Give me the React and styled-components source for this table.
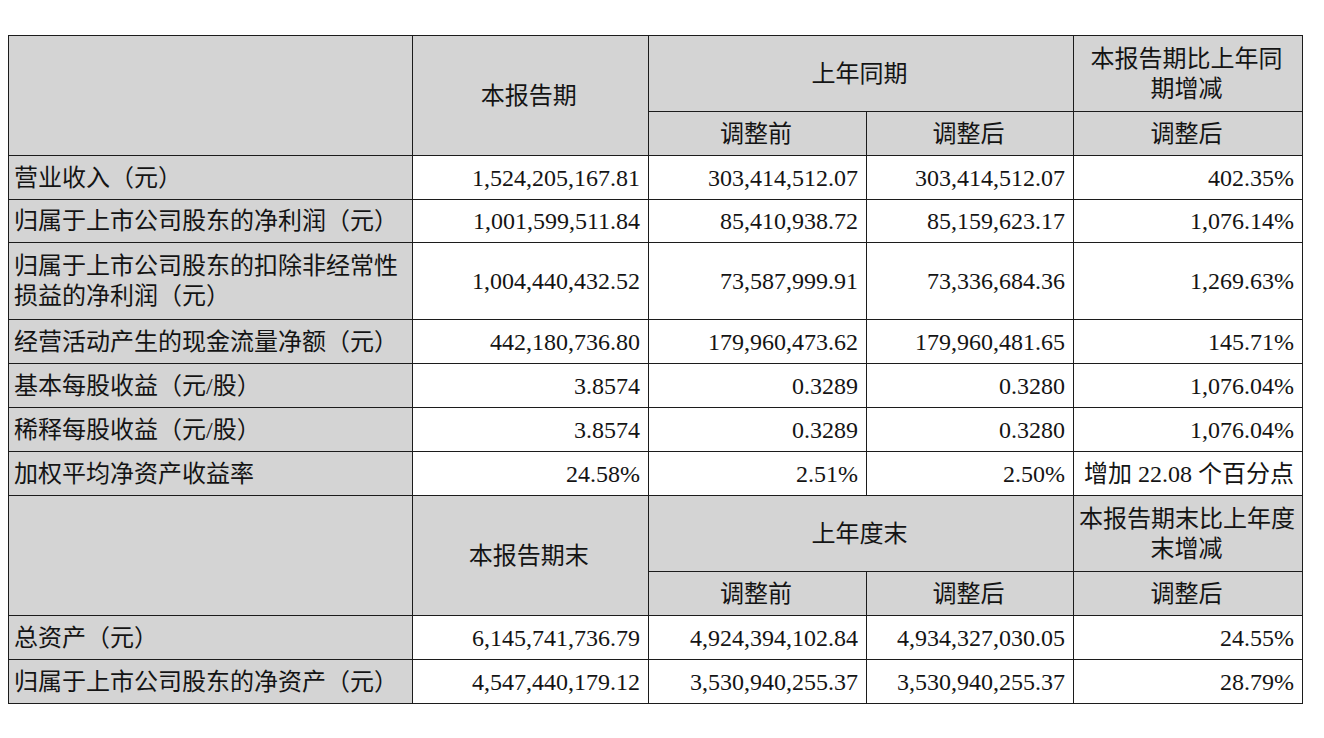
import React from 'react';
import styled, { createGlobalStyle } from 'styled-components';

const GlobalStyle = createGlobalStyle`
  html, body {
    margin: 0;
    padding: 0;
    background: #ffffff;
  }
  body {
    font-family: "Liberation Serif", "Noto Sans CJK SC", serif;
    color: #111111;
  }
`;

const Page = styled.div`
  padding: 35px 0 0 8px;
  width: 1324px;
  height: 738px;
  box-sizing: border-box;
`;

const Table = styled.table`
  width: 1294px;
  border-collapse: collapse;
  table-layout: fixed;
  font-size: 24px;
  line-height: 30px;
`;

const Row = styled.tr`
  height: ${(p) => p.$h || 44}px;
`;

const Cell = styled.td`
  border: 1px solid #1c1c1c;
  padding: 0 8px 0 5px;
  box-sizing: border-box;
  vertical-align: middle;
  white-space: nowrap;
  background: ${(p) => (p.$gray ? '#d4d4d4' : '#ffffff')};
  text-align: ${(p) => p.$align || 'right'};
  color: #141414;
`;

const cols = [403.5, 236.5, 218, 207, 229];

const firstBlock = [
  ['营业收入（元）', '1,524,205,167.81', '303,414,512.07', '303,414,512.07', '402.35%'],
  ['归属于上市公司股东的净利润（元）', '1,001,599,511.84', '85,410,938.72', '85,159,623.17', '1,076.14%', 43],
  [['归属于上市公司股东的扣除非经常性', '损益的净利润（元）'], '1,004,440,432.52', '73,587,999.91', '73,336,684.36', '1,269.63%', 77],
  ['经营活动产生的现金流量净额（元）', '442,180,736.80', '179,960,473.62', '179,960,481.65', '145.71%'],
  ['基本每股收益（元/股）', '3.8574', '0.3289', '0.3280', '1,076.04%'],
  ['稀释每股收益（元/股）', '3.8574', '0.3289', '0.3280', '1,076.04%'],
  ['加权平均净资产收益率', '24.58%', '2.51%', '2.50%', '增加 22.08 个百分点'],
];

const secondBlock = [
  ['总资产（元）', '6,145,741,736.79', '4,924,394,102.84', '4,934,327,030.05', '24.55%'],
  ['归属于上市公司股东的净资产（元）', '4,547,440,179.12', '3,530,940,255.37', '3,530,940,255.37', '28.79%'],
];

function Lines({ value }) {
  if (!Array.isArray(value)) return value;
  return value.map((line, i) => (
    <React.Fragment key={i}>
      {i > 0 && <br />}
      {line}
    </React.Fragment>
  ));
}

function HeaderBlock({ current, prior, change }) {
  return (
    <>
      <Row $h={76}>
        <Cell $gray rowSpan={2} />
        <Cell $gray $align="center" rowSpan={2}>{current}</Cell>
        <Cell $gray $align="center" colSpan={2}>{prior}</Cell>
        <Cell $gray $align="center"><Lines value={change} /></Cell>
      </Row>
      <Row>
        <Cell $gray $align="center">调整前</Cell>
        <Cell $gray $align="center">调整后</Cell>
        <Cell $gray $align="center">调整后</Cell>
      </Row>
    </>
  );
}

function DataRow({ row }) {
  const [label, a, b, c, d, h] = row;
  return (
    <Row $h={h}>
      <Cell $gray $align="left"><Lines value={label} /></Cell>
      <Cell>{a}</Cell>
      <Cell>{b}</Cell>
      <Cell>{c}</Cell>
      <Cell>{d}</Cell>
    </Row>
  );
}

export default function App() {
  return (
    <Page>
      <GlobalStyle />
      <Table>
        <colgroup>
          {cols.map((w, i) => (
            <col key={i} style={{ width: w }} />
          ))}
        </colgroup>
        <tbody>
          <HeaderBlock current="本报告期" prior="上年同期" change={['本报告期比上年同', '期增减']} />
          {firstBlock.map((row, i) => (
            <DataRow key={i} row={row} />
          ))}
          <HeaderBlock current="本报告期末" prior="上年度末" change={['本报告期末比上年度', '末增减']} />
          {secondBlock.map((row, i) => (
            <DataRow key={i} row={row} />
          ))}
        </tbody>
      </Table>
    </Page>
  );
}
